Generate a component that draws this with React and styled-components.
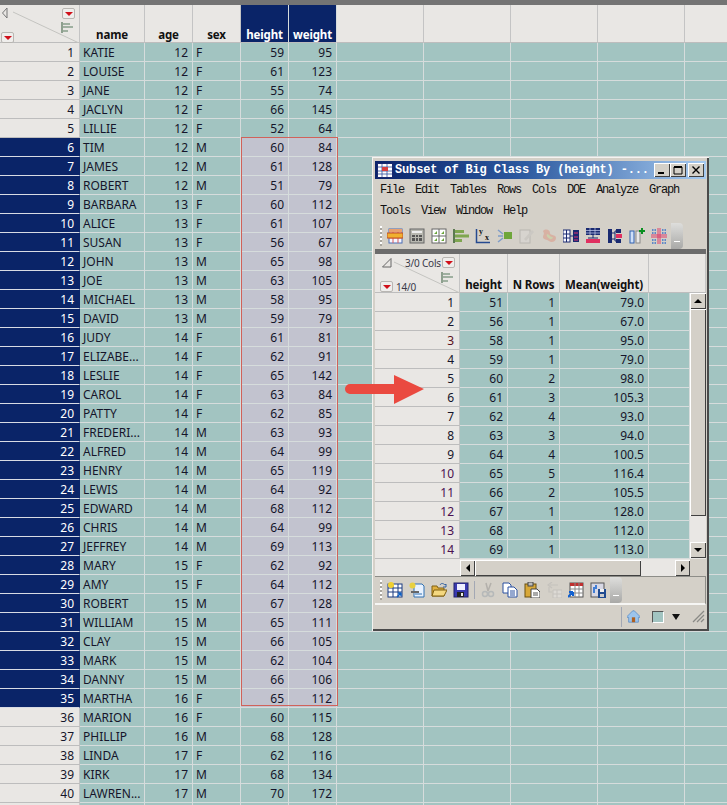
import styled, { createGlobalStyle } from "styled-components"

const students = [
  ["KATIE", 12, "F", 59, 95], ["LOUISE", 12, "F", 61, 123], ["JANE", 12, "F", 55, 74], ["JACLYN", 12, "F", 66, 145],
  ["LILLIE", 12, "F", 52, 64], ["TIM", 12, "M", 60, 84], ["JAMES", 12, "M", 61, 128], ["ROBERT", 12, "M", 51, 79],
  ["BARBARA", 13, "F", 60, 112], ["ALICE", 13, "F", 61, 107], ["SUSAN", 13, "F", 56, 67], ["JOHN", 13, "M", 65, 98],
  ["JOE", 13, "M", 63, 105], ["MICHAEL", 13, "M", 58, 95], ["DAVID", 13, "M", 59, 79], ["JUDY", 14, "F", 61, 81],
  ["ELIZABE...", 14, "F", 62, 91], ["LESLIE", 14, "F", 65, 142], ["CAROL", 14, "F", 63, 84], ["PATTY", 14, "F", 62, 85],
  ["FREDERI...", 14, "M", 63, 93], ["ALFRED", 14, "M", 64, 99], ["HENRY", 14, "M", 65, 119], ["LEWIS", 14, "M", 64, 92],
  ["EDWARD", 14, "M", 68, 112], ["CHRIS", 14, "M", 64, 99], ["JEFFREY", 14, "M", 69, 113], ["MARY", 15, "F", 62, 92],
  ["AMY", 15, "F", 64, 112], ["ROBERT", 15, "M", 67, 128], ["WILLIAM", 15, "M", 65, 111], ["CLAY", 15, "M", 66, 105],
  ["MARK", 15, "M", 62, 104], ["DANNY", 15, "M", 66, 106], ["MARTHA", 16, "F", 65, 112], ["MARION", 16, "F", 60, 115],
  ["PHILLIP", 16, "M", 68, 128], ["LINDA", 17, "F", 62, 116], ["KIRK", 17, "M", 68, 134], ["LAWREN...", 17, "M", 70, 172],
]

const subset = [
  [51, 1, "79.0"], [56, 1, "67.0"], [58, 1, "95.0"], [59, 1, "79.0"], [60, 2, "98.0"], [61, 3, "105.3"], [62, 4, "93.0"],
  [63, 3, "94.0"], [64, 4, "100.5"], [65, 5, "116.4"], [66, 2, "105.5"], [67, 1, "128.0"], [68, 1, "112.0"], [69, 1, "113.0"],
]

const BLANKS = [87, 87, 87, 87, 87]

const Global = createGlobalStyle`
  html, body { margin: 0; padding: 0; background: #a2c4c1; }
  body { width: 727px; height: 805px; overflow: hidden; font-family: "Noto Sans", Tahoma, sans-serif; font-size: 12px; color: #15152a; }
`

const Page = styled.div`
  position: relative;
  width: 727px;
  height: 805px;
  overflow: hidden;
  display: flex;
  flex-direction: column;
`

const TopBar = styled.div`
  height: 5px;
  background: #747474;
  flex: none;
`

const HeadRow = styled.div`
  display: flex;
  height: ${p => p.$h}px;
  flex: none;
  background: #e9e7e4;
`

const Corner = styled.div`
  position: relative;
  flex: none;
  width: ${p => p.$w}px;
  border-right: 1px solid #c4c4c4;
  border-bottom: 1px solid #bdbdbd;
  box-sizing: border-box;
`

const HeadCell = styled.div`
  flex: none;
  box-sizing: border-box;
  width: ${p => p.$w}px;
  border-right: 1px solid ${p => (p.$on ? "#d6dcdc" : "#c4c4c4")};
  border-bottom: 1px solid #bdbdbd;
  background: ${p => (p.$on ? "#0a2468" : "transparent")};
  color: ${p => (p.$on ? "#fff" : "#111")};
  font-weight: 700;
  font-size: 11.5px;
  letter-spacing: -0.15px;
  line-height: 15px;
  text-align: center;
  display: flex;
  align-items: flex-end;
  justify-content: center;
  padding-bottom: 0;
  white-space: nowrap;
`

const Row = styled.div`
  display: flex;
  height: 19px;
  flex: none;
`

const RowNum = styled.div`
  flex: none;
  box-sizing: border-box;
  width: ${p => p.$w}px;
  padding-right: 5px;
  text-align: right;
  line-height: 20px;
  background: ${p => (p.$on ? "#0a2468" : "#e9e7e4")};
  color: ${p => (p.$on ? "#fff" : p.$tint || "#15152a")};
  border-bottom: 1px solid ${p => (p.$on ? "#d8dbe4" : "#bdbdbd")};
  border-right: 1px solid ${p => (p.$on ? "#0a2468" : "#c4c4c4")};
`

const Cell = styled.div`
  flex: none;
  box-sizing: border-box;
  width: ${p => p.$w}px;
  padding: 0 ${p => (p.$left ? 0 : 4)}px 0 ${p => (p.$left ? 3 : 0)}px;
  text-align: ${p => (p.$left ? "left" : "right")};
  line-height: 20px;
  white-space: nowrap;
  background: ${p => (p.$on ? "#c2c3cf" : "#a2c4c1")};
  border-right: 1px solid #d6dcdc;
  border-bottom: 1px solid #d6dcdc;
`

const Selection = styled.div`
  position: absolute;
  left: 241px;
  top: 137px;
  width: 95px;
  height: 567px;
  border: 1px solid #d0625a;
  pointer-events: none;
`

const Arrow = styled.svg`
  position: absolute;
  left: 344px;
  top: 374px;
`

const RedButton = styled.div`
  position: absolute;
  left: ${p => p.$x}px;
  top: ${p => p.$y}px;
  width: 13px;
  height: 11px;
  box-sizing: border-box;
  background: #efeeec;
  border: 1px solid #b8b6b2;
  border-radius: 2px;
  display: flex;
  align-items: center;
  justify-content: center;
  &::after {
    content: "";
    border-left: 4px solid transparent;
    border-right: 4px solid transparent;
    border-top: 4px solid #d0101a;
  }
`

const Diagonal = styled.svg`
  position: absolute;
  left: 0;
  top: 0;
  pointer-events: none;
`

const CornerText = styled.span`
  position: absolute;
  left: ${p => p.$x}px;
  top: ${p => p.$y}px;
  font-size: 10px;
  letter-spacing: -0.2px;
  line-height: 12px;
  color: #3a3a4a;
  white-space: nowrap;
`

const Window = styled.div`
  position: absolute;
  left: 372px;
  top: 157px;
  width: 337px;
  height: 474px;
  box-sizing: border-box;
  padding: 4px 3px 3px 3px;
  background: #d4d0c8;
  display: flex;
  flex-direction: column;
  box-shadow: inset 1px 1px 0 #f4f3f0, inset -2px -2px 0 #4a4a4a, inset 2px 2px 0 #d4d0c8;
`

const TitleBar = styled.div`
  height: 18px;
  flex: none;
  display: flex;
  align-items: center;
  padding: 0 2px 0 2px;
  background: linear-gradient(90deg, #0a246a 0%, #2d5aa0 45%, #a6caf0 100%);
`

const TitleText = styled.span`
  flex: 1;
  margin-left: 2px;
  font-family: "Liberation Mono", monospace;
  font-weight: 700;
  font-size: 12px;
  letter-spacing: -0.15px;
  color: #fff;
  white-space: nowrap;
`

const WinButton = styled.div`
  flex: none;
  width: 16px;
  height: 14px;
  box-sizing: border-box;
  background: #d4d0c8;
  display: flex;
  align-items: center;
  justify-content: center;
  box-shadow: inset 1px 1px 0 #fff, inset -1px -1px 0 #404040;
  margin-left: ${p => p.$gap || 0}px;
`

const MenuBar = styled.div`
  flex: none;
  display: flex;
  flex-wrap: wrap;
  padding: 1px 0 0 5px;
  column-gap: 11px;
`

const MenuItem = styled.span`
  height: 21px;
  line-height: 21px;
  font-family: "Liberation Mono", monospace;
  font-size: 12px;
  letter-spacing: -1.2px;
  color: #111;
`

const MenuBreak = styled.div`
  flex-basis: 100%;
  height: 0;
`

const Toolbar = styled.div`
  flex: none;
  height: ${p => p.$h}px;
  display: flex;
  align-items: center;
  padding-left: 5px;
  border-bottom: ${p => (p.$dark ? "5px solid #6c6c6c" : "none")};
`

const Gripper = styled.div`
  flex: none;
  width: 2px;
  height: 20px;
  margin-right: 5px;
  background: repeating-linear-gradient(180deg, #fff 0 2px, #a8a59e 2px 4px);
`

const ToolIcon = styled.svg`
  flex: none;
  margin-right: ${p => p.$gap}px;
  opacity: ${p => (p.$faded ? 0.35 : 1)};
`

const AxisLetter = styled.text`
  font-family: "Liberation Serif", serif;
  font-weight: 700;
  font-size: 8px;
  fill: #111;
`

const ToolSep = styled.div`
  flex: none;
  width: 1px;
  height: 18px;
  background: #a3a8b4;
  margin: 0 5px 0 -1px;
`

const Chevron = styled.div`
  flex: none;
  width: 12px;
  height: 26px;
  margin-left: -2px;
  border-radius: 0 4px 4px 0;
  background: linear-gradient(180deg, #dededc 0%, #a9a9a7 100%);
  position: relative;
  &::after {
    content: "";
    position: absolute;
    left: 3px;
    bottom: 7px;
    width: 6px;
    height: 1px;
    background: #fff;
  }
`

const TableArea = styled.div`
  flex: none;
  display: flex;
  background: #e9e7e4;
`

const TableCol = styled.div`
  flex: none;
  display: flex;
  flex-direction: column;
`

const ScrollY = styled.div`
  flex: none;
  width: 16px;
  height: 265px;
  display: flex;
  flex-direction: column;
  background: #e9e7e4;
`

const ScrollBtn = styled.div`
  flex: none;
  width: ${p => p.$w || 16}px;
  height: ${p => p.$h || 16}px;
  box-sizing: border-box;
  background: #d4d0c8;
  box-shadow: inset 1px 1px 0 #fff, inset -1px -1px 0 #404040;
  display: flex;
  align-items: center;
  justify-content: center;
  &::after {
    content: "";
    ${p => p.$dir === "up" && "border-left: 4px solid transparent; border-right: 4px solid transparent; border-bottom: 4px solid #000;"}
    ${p => p.$dir === "down" && "border-left: 4px solid transparent; border-right: 4px solid transparent; border-top: 4px solid #000;"}
    ${p => p.$dir === "left" && "border-top: 4px solid transparent; border-bottom: 4px solid transparent; border-right: 4px solid #000;"}
    ${p => p.$dir === "right" && "border-top: 4px solid transparent; border-bottom: 4px solid transparent; border-left: 4px solid #000;"}
  }
`

const Thumb = styled.div`
  flex: none;
  width: ${p => p.$w}px;
  height: ${p => p.$h}px;
  box-sizing: border-box;
  background: #d4d0c8;
  box-shadow: inset 1px 1px 0 #fff, inset -1px -1px 0 #404040;
`

const Track = styled.div`
  flex: 1;
`

const HScrollRow = styled.div`
  flex: none;
  display: flex;
  height: 17px;
  background: #e9e7e4;
`

const HScrollPad = styled.div`
  flex: none;
  width: 85px;
`

const HScroll = styled.div`
  flex: none;
  width: 230px;
  padding-top: 1px;
  box-sizing: border-box;
  display: flex;
  background: #e9e7e4;
  align-items: flex-start;
`

const FillGray = styled.div`
  flex: 1;
  background: #d4d0c8;
`

const LowerBar = styled.div`
  flex: none;
  height: 26px;
  display: flex;
  align-items: center;
  padding-left: 5px;
  border-bottom: 2px solid #f6f6f4;
  border-top: 1px solid #8d8d88;
  border-right: 1px solid #8d8d88;
`

const StatusBar = styled.div`
  flex: 1;
  display: flex;
  align-items: center;
  justify-content: flex-end;
  padding-right: 1px;
`

const StatusSep = styled.div`
  width: 1px;
  height: 20px;
  background: #a3a8b4;
  margin-right: 5px;
`

const Swatch = styled.div`
  box-sizing: border-box;
  width: 12px;
  height: 12px;
  margin: 0 8px 0 12px;
  background: #a2c4c1;
  border: 1px solid;
  border-color: #555 #fff #fff #555;
`

const DropMark = styled.div`
  width: 0;
  height: 0;
  margin-right: 12px;
  border-left: 4px solid transparent;
  border-right: 4px solid transparent;
  border-top: 6px solid #111;
`

const icons = {
  data: <><rect x="2" y="1" width="13" height="14" fill="#f6f6ff" stroke="#4a6cb4" /><path d="M2 5h13M2 10h13M6 1v14M11 1v14" stroke="#d85a5a" /><rect x="0" y="5" width="16" height="5" fill="#f0b030" stroke="#c05020" /><path d="M2 1h13v3H2z" fill="#e8a070" /></>,
  calc: <><rect x="1" y="1" width="14" height="14" fill="#b8b8b0" stroke="#666" /><rect x="3" y="3" width="10" height="2" fill="#eee" /><path d="M3 7h3v2H3zM7 7h2v2H7zM10 7h3v2h-3zM3 10h3v3H3zM7 10h2v3H7zM10 10h3v3h-3z" fill="#555" /></>,
  grid: <><rect x="1" y="1" width="14" height="14" fill="#fff" stroke="#666" /><path d="M8 1v14M1 8h14" stroke="#666" /><path d="M3 6h3V3zM10 6h3V3zM3 13h3v-3zM10 13h3v-3z" fill="#6aa53a" /></>,
  bars: <><path d="M1 1v14" stroke="#355e2a" strokeWidth="1.5" /><rect x="2" y="2" width="9" height="3" fill="#7fa650" /><rect x="2" y="6.5" width="14" height="3" fill="#7fa650" /><rect x="2" y="11" width="7" height="3" fill="#7fa650" /></>,
  fit: <><path d="M1.500 1v13.500H15" fill="none" stroke="#254a90" strokeWidth="1.500" /><AxisLetter x="4" y="6">y</AxisLetter><AxisLetter x="10" y="12">x</AxisLetter></>,
  model: <><path d="M1 2l5 4M1 8h5M1 14l5-4" stroke="#7e9cc8" strokeWidth="1.500" /><rect x="7" y="4" width="8" height="7" fill="#6fa63a" /></>,
  pencil: <><rect x="1" y="2" width="10" height="13" fill="#ddd" stroke="#888" /><path d="M5 11l8-9 2 2-8 9z" fill="#bbb" /></>,
  blob: <><path d="M2 3c3-3 7-1 7 2s6 1 6 5-5 5-7 3-6-1-6-4 2-2 0-6z" fill="#e07a60" /><path d="M6 6c2 0 3 3 5 3s0 3-2 2-4-3-3-5z" fill="#b8d07a" /></>,
  tabA: <><rect x="0" y="2" width="7" height="12" fill="#f6f6ff" stroke="#1a2a70" /><path d="M0 6h7M0 10h7M3.500 2v12" stroke="#1a2a70" /><path d="M7 8h3" stroke="#1a2a70" /><rect x="10" y="2" width="6" height="12" fill="#1a2a70" /><path d="M11 5h4M11 9h4M11 12h4" stroke="#e03070" /></>,
  tabB: <><rect x="1" y="0" width="14" height="7" fill="#1a2a70" /><path d="M1 2.500h14M1 5h14M5 0v7M10 0v7" stroke="#c8d0f0" strokeWidth=".7" /><path d="M8 7v3M3 10h10" stroke="#1a2a70" /><rect x="1" y="11" width="14" height="4" fill="#e03060" /></>,
  tabC: <><rect x="1" y="1" width="4" height="14" fill="#1a2a70" /><path d="M5 5h3M5 11h3M8 3v10M8 3h1M8 13h1" stroke="#1a2a70" /><rect x="9" y="1" width="5" height="4" fill="#1a2a70" /><rect x="9" y="6" width="6" height="4" fill="#e03060" /><rect x="9" y="11" width="5" height="4" fill="#1a2a70" /></>,
  addCol: <><rect x="1" y="3" width="4" height="12" fill="#cfe0f8" stroke="#3060b0" /><rect x="7" y="3" width="4" height="12" fill="#e8e8e8" stroke="#888" /><path d="M13 0v6M10 3h6" stroke="#0a9020" strokeWidth="2" /></>,
  split: <><path d="M7 0v16M9 0v16M0 7h16M0 9h16" stroke="#e03060" strokeWidth=".9" /><path d="M1 2h4M1 5h4M11 2h4M11 5h4M1 12h4M1 15h4M11 12h4M11 15h4" stroke="#3a70c8" strokeWidth="1.500" strokeDasharray="1.500 1" /></>,
  newTab: <><rect x="1" y="2" width="14" height="13" fill="#fff" stroke="#1a3a80" /><path d="M1 6h14M1 10h14M6 2v13M11 2v13" stroke="#1a3a80" /><circle cx="4" cy="3" r="3" fill="#f0d030" /><path d="M10 15l4-4M14 11v3M14 11h-3" stroke="#1060c0" strokeWidth="1.500" /></>,
  newScript: <><path d="M5 2h8l2 2v11H5z" fill="#e8f2ff" stroke="#3070b0" /><circle cx="3.500" cy="3.500" r="3" fill="#e8d040" /><path d="M2 9h8v2H2z" fill="#666" /><path d="M6 12h7" stroke="#3070b0" /></>,
  open: <><path d="M1 4h5l1 2h6v8H1z" fill="#e0b040" stroke="#806010" /><path d="M3 8h13l-3 6H1z" fill="#f4d880" stroke="#806010" /><path d="M9 3c1-2 3-2 5 0l1-1v3h-3" fill="none" stroke="#3060a0" /></>,
  save: <><rect x="1" y="1" width="14" height="14" fill="#3a3ab0" stroke="#20206a" /><rect x="4" y="2" width="8" height="6" fill="#eef" /><rect x="4" y="10" width="7" height="5" fill="#222" /><rect x="8" y="11" width="2" height="3" fill="#eee" /></>,
  cut: <><path d="M6 1l2 8M11 1L8 9" stroke="#777" strokeWidth="1.500" /><circle cx="5" cy="12" r="2.500" fill="none" stroke="#8090a0" strokeWidth="1.500" /><circle cx="11" cy="12" r="2.500" fill="none" stroke="#8090a0" strokeWidth="1.500" /></>,
  copy: <><path d="M1 1h6l2 2v8H1z" fill="#fff" stroke="#2a50a0" /><path d="M6 5h6l3 3v7H6z" fill="#fff" stroke="#2a50a0" /><path d="M8 9h5M8 11h5M8 13h5" stroke="#2a50a0" /></>,
  paste: <><rect x="1" y="2" width="11" height="13" fill="#d8a838" stroke="#6a5010" /><rect x="4" y="0" width="5" height="4" fill="#bbb" stroke="#444" /><path d="M7 7h6l3 3v6H7z" fill="#fff" stroke="#444" /><path d="M9 11h5M9 13h5" stroke="#555" /></>,
  undoGrid: <><path d="M7 8h9v8H7zM7 12h9M11 8v8" fill="#eee" stroke="#aaa" /><path d="M12 3H4M6 0L2 3l4 3M3 3v7h3" fill="none" stroke="#aaa" strokeWidth="1.200" /></>,
  calcSheet: <><rect x="2" y="1" width="13" height="14" fill="#fff" stroke="#555" /><rect x="2" y="1" width="13" height="3" fill="#c03030" /><path d="M2 7h13M2 11h13M7 1v14M11 1v14" stroke="#888" /><path d="M0 15l5-5M5 10v4M5 10H1" stroke="#1060d0" strokeWidth="2" /></>,
  export: <><rect x="1" y="1" width="13" height="14" fill="#d8d8e4" stroke="#555" /><rect x="8" y="7" width="8" height="9" fill="#1f4a90" /><rect x="10" y="7" width="4" height="3" fill="#eee" /><rect x="10" y="12" width="4" height="3" fill="#ccc" /><path d="M4 5v6M6 3v4" stroke="#1060d0" strokeWidth="1.500" /></>,
  home: <><path d="M0 8l7-7h2l7 7v1h-2v6H2V9H0z" fill="#9cc4ec" stroke="#4a80c0" strokeWidth=".8" /><rect x="6" y="9" width="4" height="6" fill="#b06020" /></>,
}

const upper = [
  ["data"], ["calc"], ["grid"], ["bars"], ["fit"], ["model"], ["pencil", true], ["blob", true],
  ["tabA"], ["tabB"], ["tabC"], ["addCol"], ["split"],
]
const lowerA = ["newTab", "newScript", "open", "save"]
const lowerB = [["cut", true], ["copy"], ["paste"], ["undoGrid", true], ["calcSheet"], ["export"]]

function Icon({ name, faded, gap = 6, size = 16 }) {
  return (
    <ToolIcon width={size} height={size} viewBox="0 0 16 16" $gap={gap} $faded={faded}>
      {icons[name]}
    </ToolIcon>
  )
}

function ColumnMark({ x, y }) {
  return (
    <g transform={`translate(${x} ${y})`} fill="#9fb0a0">
      <rect x="0" y="0" width="2" height="11" fill="#8ea08e" />
      <rect x="2" y="1" width="7" height="2" />
      <rect x="2" y="4" width="10" height="2" />
      <rect x="2" y="8" width="5" height="2" />
    </g>
  )
}

export default function App() {
  return (
    <Page>
      <Global />
      <TopBar />
      <HeadRow $h={38}>
        <Corner $w={80}>
          <Diagonal width="80" height="38">
            <path d="M13 7L79 38" stroke="#c4c4c0" strokeWidth="1" />
            <path d="M7 3L2.500 8 7 13z" fill="#e9e7e4" stroke="#777" />
            <ColumnMark x={61} y={17} />
          </Diagonal>
          <RedButton $x={62} $y={3} />
          <RedButton $x={1} $y={27} />
        </Corner>
        <HeadCell $w={65}>name</HeadCell>
        <HeadCell $w={48}>age</HeadCell>
        <HeadCell $w={48}>sex</HeadCell>
        <HeadCell $w={48} $on>height</HeadCell>
        <HeadCell $w={48} $on>weight</HeadCell>
        {BLANKS.map((w, i) => <HeadCell key={i} $w={w} />)}
      </HeadRow>
      {students.map((s, i) => {
        const picked = i >= 5 && i <= 34
        return (
          <Row key={i}>
            <RowNum $w={80} $on={picked}>{i + 1}</RowNum>
            <Cell $w={65} $left>{s[0]}</Cell>
            <Cell $w={48}>{s[1]}</Cell>
            <Cell $w={48} $left>{s[2]}</Cell>
            <Cell $w={48} $on={picked}>{s[3]}</Cell>
            <Cell $w={48} $on={picked}>{s[4]}</Cell>
            {BLANKS.map((w, k) => <Cell key={k} $w={w} />)}
          </Row>
        )
      })}
      <Row>
        <RowNum $w={80} />
        {[65, 48, 48, 48, 48, ...BLANKS].map((w, k) => <Cell key={k} $w={w} />)}
      </Row>
      <Selection />

      <Window>
        <TitleBar>
          <svg width="16" height="15" viewBox="0 0 16 15">
            <rect x="0.500" y="0.500" width="15" height="14" fill="#fff" stroke="#1a2a70" />
            <path d="M1 4h14M1 8h14M1 11h14M5 1v13M10 1v13" stroke="#3050a0" strokeWidth=".8" />
            <rect x="5" y="4" width="6" height="4" fill="#d84040" />
          </svg>
          <TitleText>Subset of Big Class By (height) -...</TitleText>
          <WinButton>
            <svg width="10" height="10"><rect x="1" y="7" width="6" height="2" fill="#000" /></svg>
          </WinButton>
          <WinButton>
            <svg width="10" height="10"><path d="M1 1.500h8M1 2.500h8M1 2v7h8V2" fill="none" stroke="#000" /></svg>
          </WinButton>
          <WinButton $gap={2}>
            <svg width="10" height="10"><path d="M1.500 1.500l7 7M8.500 1.500l-7 7" stroke="#000" strokeWidth="1.400" /></svg>
          </WinButton>
        </TitleBar>
        <MenuBar>
          <MenuItem>File</MenuItem>
          <MenuItem>Edit</MenuItem>
          <MenuItem>Tables</MenuItem>
          <MenuItem>Rows</MenuItem>
          <MenuItem>Cols</MenuItem>
          <MenuItem>DOE</MenuItem>
          <MenuItem>Analyze</MenuItem>
          <MenuItem>Graph</MenuItem>
          <MenuBreak />
          <MenuItem>Tools</MenuItem>
          <MenuItem>View</MenuItem>
          <MenuItem>Window</MenuItem>
          <MenuItem>Help</MenuItem>
        </MenuBar>
        <Toolbar $h={27} $dark>
          <Gripper />
          {upper.map(([n, f]) => <Icon key={n} name={n} faded={f} />)}
          <Chevron />
        </Toolbar>
        <HeadRow $h={39}>
          <Corner $w={85}>
            <Diagonal width="85" height="39">
              <path d="M19 8L85 39" stroke="#c4c4c0" strokeWidth="1" />
              <path d="M16 4.500L7.500 13H16z" fill="#e9e7e4" stroke="#666" />
              <ColumnMark x={66} y={18} />
            </Diagonal>
            <CornerText $x={30} $y={3}>3/0 Cols</CornerText>
            <RedButton $x={67} $y={3} />
            <RedButton $x={5} $y={27} />
            <CornerText $x={21} $y={27}>14/0</CornerText>
          </Corner>
          <HeadCell $w={48}>height</HeadCell>
          <HeadCell $w={52}>N Rows</HeadCell>
          <HeadCell $w={89}>Mean(weight)</HeadCell>
          <HeadCell $w={57} />
        </HeadRow>
        <TableArea>
          <TableCol>
            {subset.map((r, i) => (
              <Row key={i}>
                <RowNum $w={85} $tint={i >= 9 ? "#4a1050" : i === 2 ? "#5a1020" : undefined}>{i + 1}</RowNum>
                <Cell $w={48}>{r[0]}</Cell>
                <Cell $w={52}>{r[1]}</Cell>
                <Cell $w={89}>{r[2]}</Cell>
                <Cell $w={41} />
              </Row>
            ))}
          </TableCol>
          <ScrollY>
            <ScrollBtn $dir="up" />
            <Thumb $w={16} $h={207} />
            <Track />
            <ScrollBtn $dir="down" />
          </ScrollY>
        </TableArea>
        <HScrollRow>
          <HScrollPad />
          <HScroll>
            <ScrollBtn $dir="left" $w={15} />
            <Thumb $w={166} $h={16} />
            <Track />
            <ScrollBtn $dir="right" $w={15} />
          </HScroll>
          <FillGray />
        </HScrollRow>
        <LowerBar>
          <Gripper />
          {lowerA.map(n => <Icon key={n} name={n} />)}
          <ToolSep />
          {lowerB.map(([n, f]) => <Icon key={n} name={n} faded={f} />)}
          <Chevron />
        </LowerBar>
        <StatusBar>
          <StatusSep />
          <Icon name="home" gap={0} size={13} />
          <Swatch />
          <DropMark />
          <svg width="13" height="13" viewBox="0 0 13 13">
            <path d="M1 12L12 1M5 12l7-7M9 12l3-3" stroke="#8a8a86" strokeWidth="1.300" />
          </svg>
        </StatusBar>
      </Window>

      <Arrow width="82" height="32" viewBox="0 0 82 32">
        <path d="M6 10H50V1L80 15 50 30V20H6a5 5 0 0 1 0-10z" fill="#ea4a40" />
      </Arrow>
    </Page>
  )
}
